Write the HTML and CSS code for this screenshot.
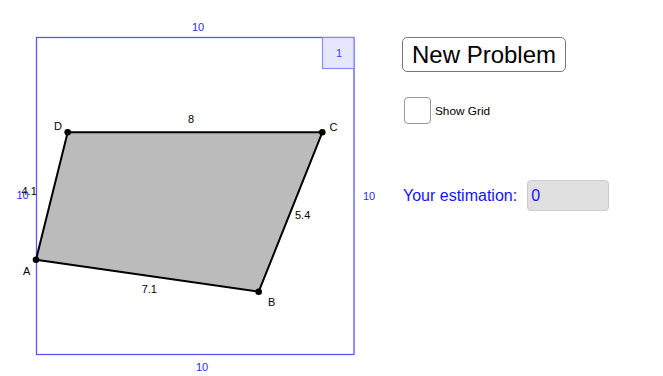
FILE: index.html
```
<!DOCTYPE html>
<html>
<head>
<meta charset="utf-8">
<link rel="stylesheet" href="styles.css">
</head>
<body>
<div class="app">
  <svg class="canvas" width="390" height="376" viewBox="0 0 390 376" xmlns="http://www.w3.org/2000/svg">
    <rect class="frame" x="36.5" y="37.5" width="317.5" height="317"/>
    <rect class="unit" x="322.5" y="37.5" width="31.5" height="31"/>
    <text class="unit-t" x="339" y="57" text-anchor="middle">1</text>
    <polygon class="quad" points="36,259.7 258.7,291.7 322.3,132.3 67.7,132.3"/>
    <circle class="pt" cx="36" cy="259.7" r="3.3"/>
    <circle class="pt" cx="258.7" cy="291.7" r="3.3"/>
    <circle class="pt" cx="322.3" cy="132.3" r="3.3"/>
    <circle class="pt" cx="67.7" cy="132.3" r="3.3"/>
    <text class="dim" x="198" y="31" text-anchor="middle">10</text>
    <text class="dim" x="202" y="371" text-anchor="middle">10</text>
    <text class="dim" x="363" y="200">10</text>
    <text class="lbl" x="21.5" y="194.5">4.1</text>
    <text class="dim" x="16.5" y="199">10</text>
    <text class="lbl" x="191" y="123" text-anchor="middle">8</text>
    <text class="lbl" x="54" y="129.5">D</text>
    <text class="lbl" x="329.5" y="131">C</text>
    <text class="lbl" x="23" y="275">A</text>
    <text class="lbl" x="268" y="305.7">B</text>
    <text class="lbl" x="141.7" y="292.7">7.1</text>
    <text class="lbl" x="295" y="219">5.4</text>
  </svg>
  <div class="controls">
    <button class="btn">New Problem</button>
    <label class="check-row">
      <span class="checkbox"></span>
      <span class="check-label">Show Grid</span>
    </label>
    <div class="estimate-row">
      <span class="estimate-label">Your estimation:</span>
      <span class="estimate-input">0</span>
    </div>
  </div>
</div>
</body>
</html>
```
FILE: styles.css
```
html, body {
  margin: 0;
  padding: 0;
  background: #ffffff;
}
body {
  font-family: "Liberation Sans", Arial, sans-serif;
  width: 663px;
  height: 376px;
  overflow: hidden;
}
.app {
  display: flex;
  flex-direction: row;
}
.canvas {
  display: block;
  flex: none;
}
.frame {
  fill: none;
  stroke: #5858ff;
  stroke-width: 1.3;
}
.unit {
  fill: #e6e6ff;
  stroke: #8c8cff;
  stroke-width: 1.2;
}
.unit-t {
  font-family: "Liberation Sans", Arial, sans-serif;
  font-size: 11px;
  fill: #4040ff;
}
.quad {
  fill: #bbbbbb;
  stroke: #000000;
  stroke-width: 2;
  stroke-linejoin: round;
}
.pt {
  fill: #000000;
}
.dim {
  font-family: "Liberation Sans", Arial, sans-serif;
  font-size: 11px;
  fill: #2a2aff;
}
.lbl {
  font-family: "Liberation Sans", Arial, sans-serif;
  font-size: 11px;
  fill: #000000;
}
.controls {
  display: flex;
  flex-direction: column;
  align-items: flex-start;
  padding-top: 37px;
  padding-left: 12px;
}
.btn {
  box-sizing: border-box;
  width: 164px;
  height: 35px;
  margin: 0;
  padding: 0;
  font-family: "Liberation Sans", Arial, sans-serif;
  font-size: 24px;
  color: #000000;
  background: #ffffff;
  border: 1.5px solid #777777;
  border-radius: 5px;
  line-height: 32px;
}
.check-row {
  display: flex;
  align-items: center;
  margin-top: 25px;
  margin-left: 2px;
}
.checkbox {
  box-sizing: border-box;
  width: 27px;
  height: 27px;
  border: 1.5px solid #999999;
  border-radius: 4px;
  background: #ffffff;
}
.check-label {
  font-size: 11.8px;
  color: #000000;
  margin-left: 4px;
}
.estimate-row {
  display: flex;
  align-items: center;
  margin-top: 56px;
  margin-left: 1px;
}
.estimate-label {
  font-size: 16px;
  color: #1414ff;
}
.estimate-input {
  box-sizing: border-box;
  width: 82px;
  height: 31px;
  margin-left: 10px;
  padding-left: 3px;
  background: #e0e0e0;
  border: 1px solid #cccccc;
  border-radius: 4px;
  font-size: 16px;
  line-height: 29px;
  color: #1414ff;
}
```
